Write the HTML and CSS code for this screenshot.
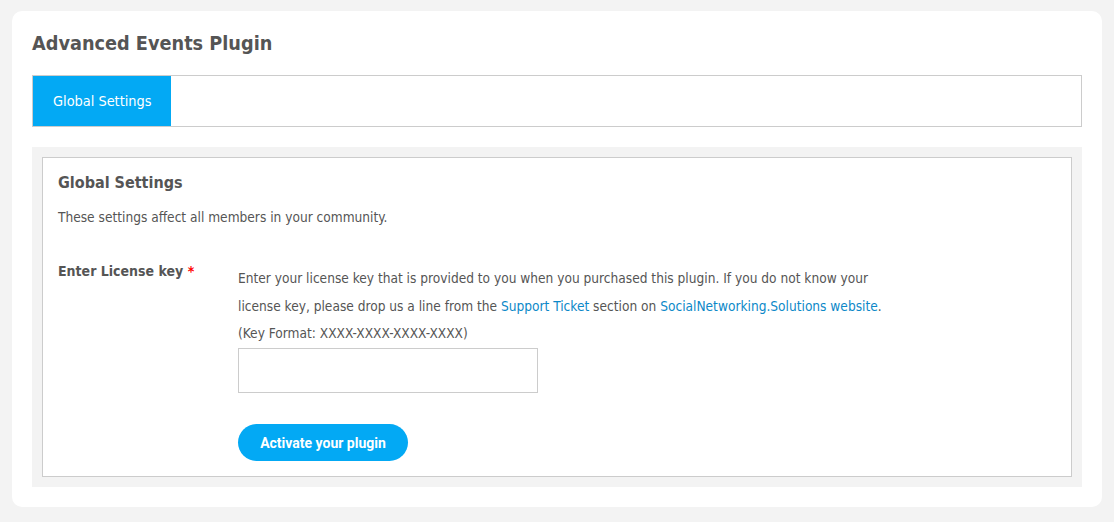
FILE: index.html
```html
<!DOCTYPE html>
<html>
<head>
<meta charset="utf-8">
<link rel="stylesheet" href="styles.css">
</head>
<body>
<div class="card">
  <h1 class="title">Advanced Events Plugin</h1>
  <div class="tabs">
    <div class="tab active">Global Settings</div>
  </div>
  <div class="panel">
    <div class="form">
      <h3 class="form-title">Global Settings</h3>
      <p class="form-desc">These settings affect all members in your community.</p>
      <div class="row">
        <div class="label">Enter License key <span class="req">*</span></div>
        <div class="field">
          <p class="hint">Enter your license key that is provided to you when you purchased this plugin. If you do not know your license key, please drop us a line from the <a href="#">Support Ticket</a> section on <a href="#">SocialNetworking.Solutions website</a>.</p>
          <p class="hint">(Key Format: XXXX-XXXX-XXXX-XXXX)</p>
          <input class="input" type="text">
          <button class="btn">Activate your plugin</button>
        </div>
      </div>
    </div>
  </div>
</div>
</body>
</html>
```
FILE: styles.css
```css
html, body { margin: 0; padding: 0; }
body {
  background: #f3f3f3;
  font-family: "DejaVu Sans Condensed", "Liberation Sans", sans-serif;
  color: #555;
  padding: 11px 12px 15px 12px;
}
.card {
  background: #fff;
  border-radius: 10px;
  padding: 21px 20px 20px 20px;
}
.title {
  margin: 0 0 19px;
  font-size: 19.7px;
  font-weight: bold;
  color: #555;
  line-height: 24px;
}
.tabs {
  border: 1px solid #ccc;
  display: flex;
  height: 50px;
}
.tab {
  display: flex;
  align-items: center;
  padding: 0 20px;
  font-size: 14.4px;
  width: 98px;
  white-space: nowrap;
}
.tab.active { background: #03a9f4; color: #fff; }
.panel {
  background: #f3f3f3;
  margin-top: 20px;
  padding: 10px;
}
.form {
  background: #fff;
  border: 1px solid #ccc;
  padding: 15px 15px 15px 15px;
}
.form-title {
  margin: 0;
  font-size: 16px;
  line-height: 20px;
  font-weight: bold;
}
.form-desc {
  margin: 16px 0 0;
  font-size: 13.6px;
  line-height: 16px;
}
.row {
  display: flex;
  margin-top: 36px;
}
.label {
  width: 180px;
  flex: none;
  font-size: 14px;
  font-weight: bold;
  line-height: 20px;
}
.req { color: #f00; }
.field {
  width: 660px;
  padding-top: 3px;
}
.hint {
  margin: 0;
  font-size: 13.6px;
  line-height: 28px;
}
.hint + .hint { margin-top: -1px; }
.hint a { color: #0c88c8; text-decoration: none; }
.input {
  display: block;
  box-sizing: border-box;
  width: 300px;
  height: 45px;
  margin-top: 1px;
  border: 1px solid #ccc;
  padding: 0 8px;
  font: inherit;
}
.btn {
  display: block;
  margin-top: 31px;
  height: 37px;
  width: 170px;
  border: 0;
  border-radius: 19px;
  background: #03a9f4;
  color: #fff;
  font-family: Roboto, "Liberation Sans", sans-serif;
  font-weight: bold;
  font-size: 14px;
}
```
